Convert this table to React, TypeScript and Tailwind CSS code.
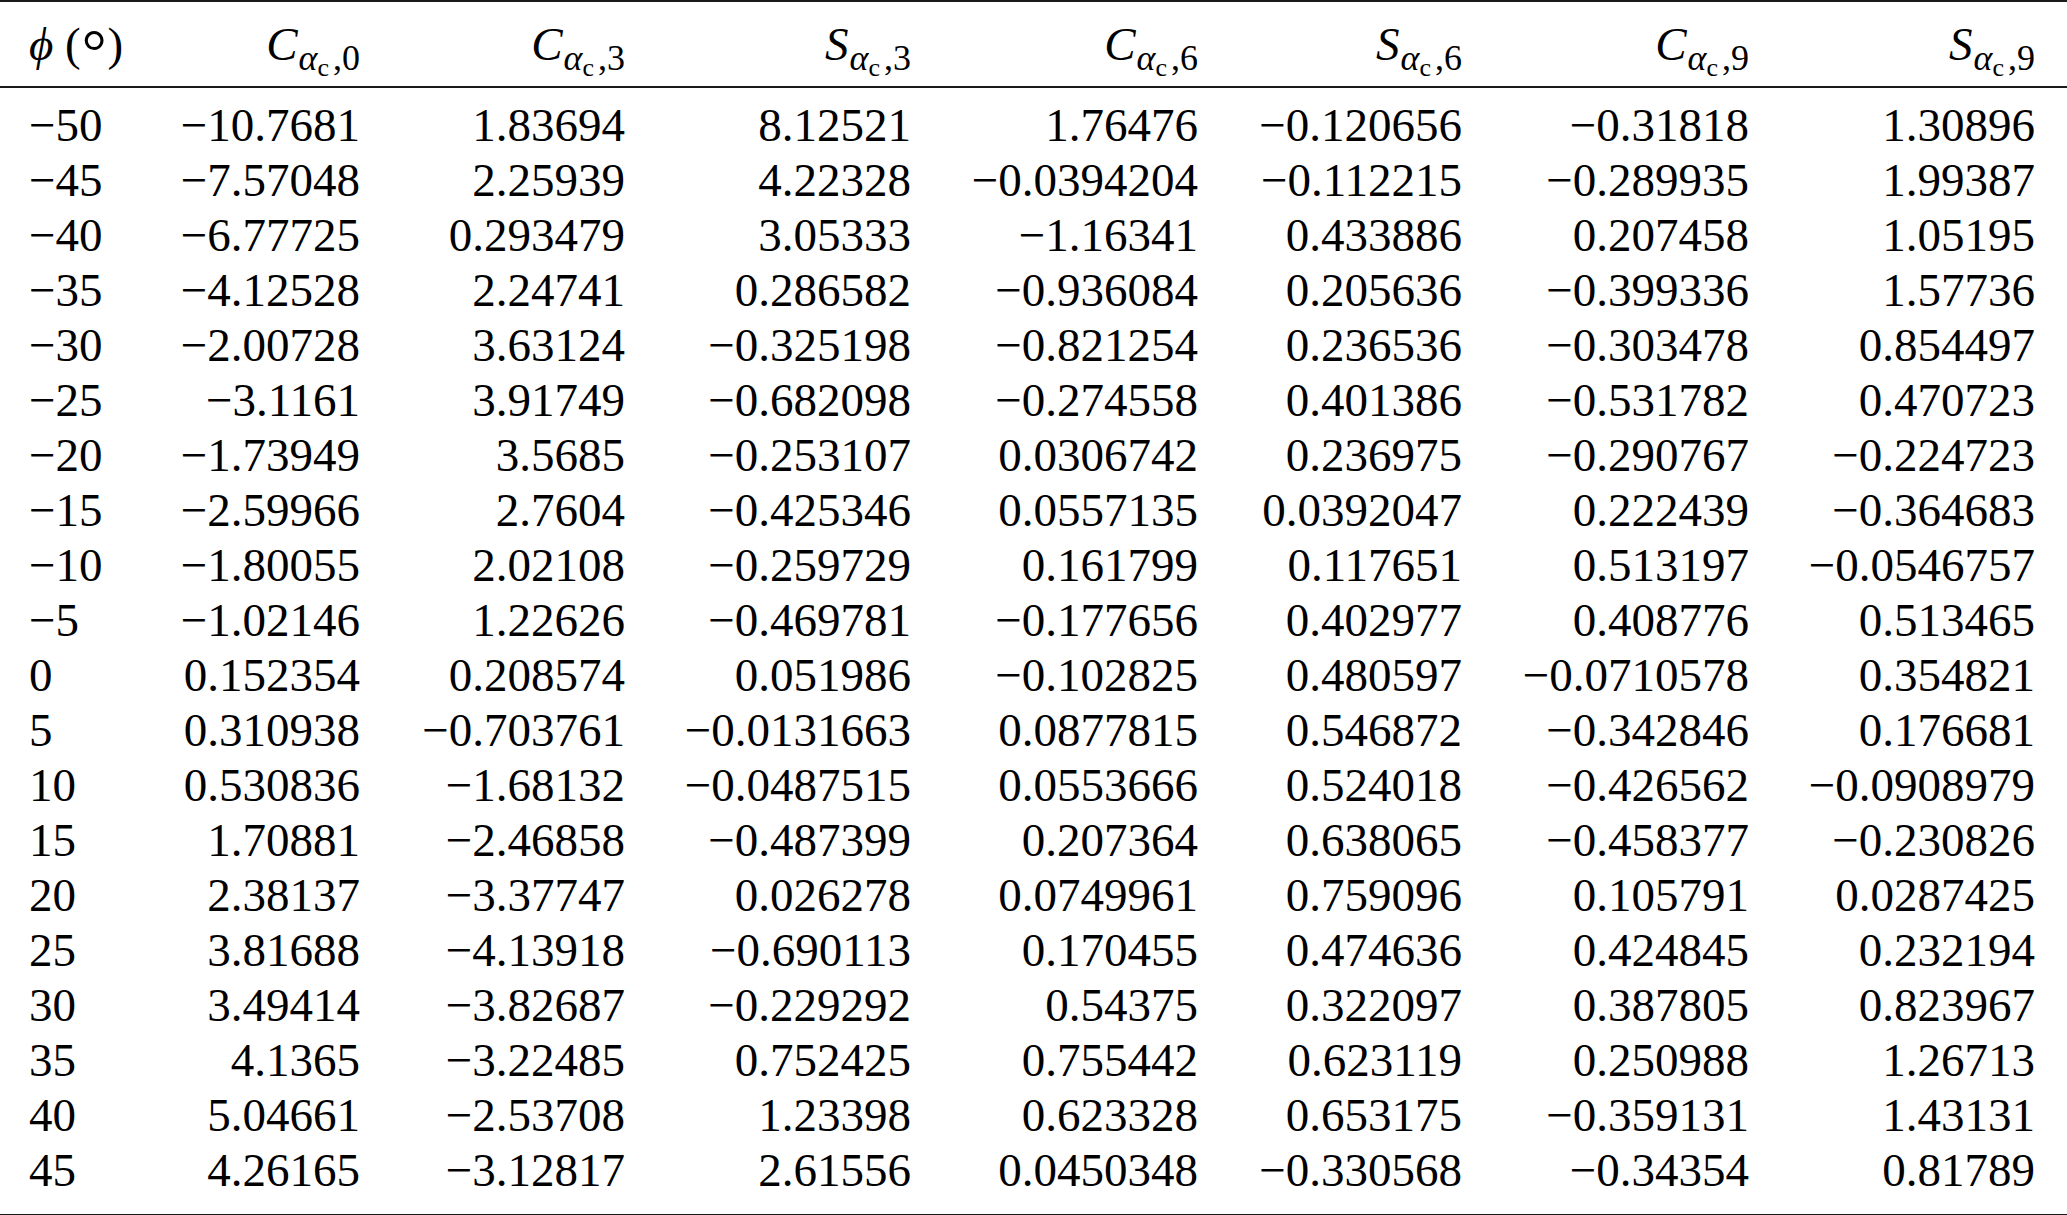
const rows: string[][] = [
  ["−50", "−10.7681", "1.83694", "8.12521", "1.76476", "−0.120656", "−0.31818", "1.30896"],
  ["−45", "−7.57048", "2.25939", "4.22328", "−0.0394204", "−0.112215", "−0.289935", "1.99387"],
  ["−40", "−6.77725", "0.293479", "3.05333", "−1.16341", "0.433886", "0.207458", "1.05195"],
  ["−35", "−4.12528", "2.24741", "0.286582", "−0.936084", "0.205636", "−0.399336", "1.57736"],
  ["−30", "−2.00728", "3.63124", "−0.325198", "−0.821254", "0.236536", "−0.303478", "0.854497"],
  ["−25", "−3.1161", "3.91749", "−0.682098", "−0.274558", "0.401386", "−0.531782", "0.470723"],
  ["−20", "−1.73949", "3.5685", "−0.253107", "0.0306742", "0.236975", "−0.290767", "−0.224723"],
  ["−15", "−2.59966", "2.7604", "−0.425346", "0.0557135", "0.0392047", "0.222439", "−0.364683"],
  ["−10", "−1.80055", "2.02108", "−0.259729", "0.161799", "0.117651", "0.513197", "−0.0546757"],
  ["−5", "−1.02146", "1.22626", "−0.469781", "−0.177656", "0.402977", "0.408776", "0.513465"],
  ["0", "0.152354", "0.208574", "0.051986", "−0.102825", "0.480597", "−0.0710578", "0.354821"],
  ["5", "0.310938", "−0.703761", "−0.0131663", "0.0877815", "0.546872", "−0.342846", "0.176681"],
  ["10", "0.530836", "−1.68132", "−0.0487515", "0.0553666", "0.524018", "−0.426562", "−0.0908979"],
  ["15", "1.70881", "−2.46858", "−0.487399", "0.207364", "0.638065", "−0.458377", "−0.230826"],
  ["20", "2.38137", "−3.37747", "0.026278", "0.0749961", "0.759096", "0.105791", "0.0287425"],
  ["25", "3.81688", "−4.13918", "−0.690113", "0.170455", "0.474636", "0.424845", "0.232194"],
  ["30", "3.49414", "−3.82687", "−0.229292", "0.54375", "0.322097", "0.387805", "0.823967"],
  ["35", "4.1365", "−3.22485", "0.752425", "0.755442", "0.623119", "0.250988", "1.26713"],
  ["40", "5.04661", "−2.53708", "1.23398", "0.623328", "0.653175", "−0.359131", "1.43131"],
  ["45", "4.26165", "−3.12817", "2.61556", "0.0450348", "−0.330568", "−0.34354", "0.81789"],
];

// coefficient headers: letter + harmonic index
const headers: [string, string][] = [
  ["C", "0"],
  ["C", "3"],
  ["S", "3"],
  ["C", "6"],
  ["S", "6"],
  ["C", "9"],
  ["S", "9"],
];

const grid = "grid grid-cols-[150px_210px_265px_286px_287px_264px_287px_286px]";

const Coef = ({ letter, index }: { letter: string; index: string }) => (
  <span className="whitespace-nowrap">
    <span className="italic">{letter}</span>
    <span className="ml-[1px] text-[36px] leading-[0] align-[-10px]">
      <span className="italic">α</span>
      <span className="text-[26px] leading-[0] align-[-6px] mr-[4px]">c</span>
      <span>,{index}</span>
    </span>
  </span>
);

const App = () => {
  return (
    <div
      className="w-[2067px] h-[1215px] bg-white text-black text-[47px] leading-[55px]"
      style={{ fontFamily: '"Liberation Serif", "Times New Roman", "DejaVu Serif", serif' }}
    >
      <div className="pr-[32px] border-t-2 border-[#1a1a1a]">
        <div className={`${grid} h-[84px] pt-[15px]`}>
          <div className="pl-[29px] whitespace-nowrap">
            <span className="italic">ϕ</span> (
            <span className="text-[62px] leading-[0] align-[-12px] mx-[1px]">°</span>)
          </div>
          {headers.map(([l, i], k) => (
            <div key={k} className="text-right">
              <Coef letter={l} index={i} />
            </div>
          ))}
        </div>
      </div>
      <div className="border-t-2 border-[#1a1a1a] pt-[10px] pb-[16px] pr-[32px]">
        {rows.map((r, idx) => (
          <div key={idx} className={`${grid} h-[55px]`}>
            {r.map((v, j) =>
              j === 0 ? (
                <div key={j} className="pl-[29px]">
                  {v}
                </div>
              ) : (
                <div key={j} className="text-right">
                  {v}
                </div>
              )
            )}
          </div>
        ))}
      </div>
      <div className="border-t-2 border-[#1a1a1a]" />
    </div>
  );
};

export default App;
